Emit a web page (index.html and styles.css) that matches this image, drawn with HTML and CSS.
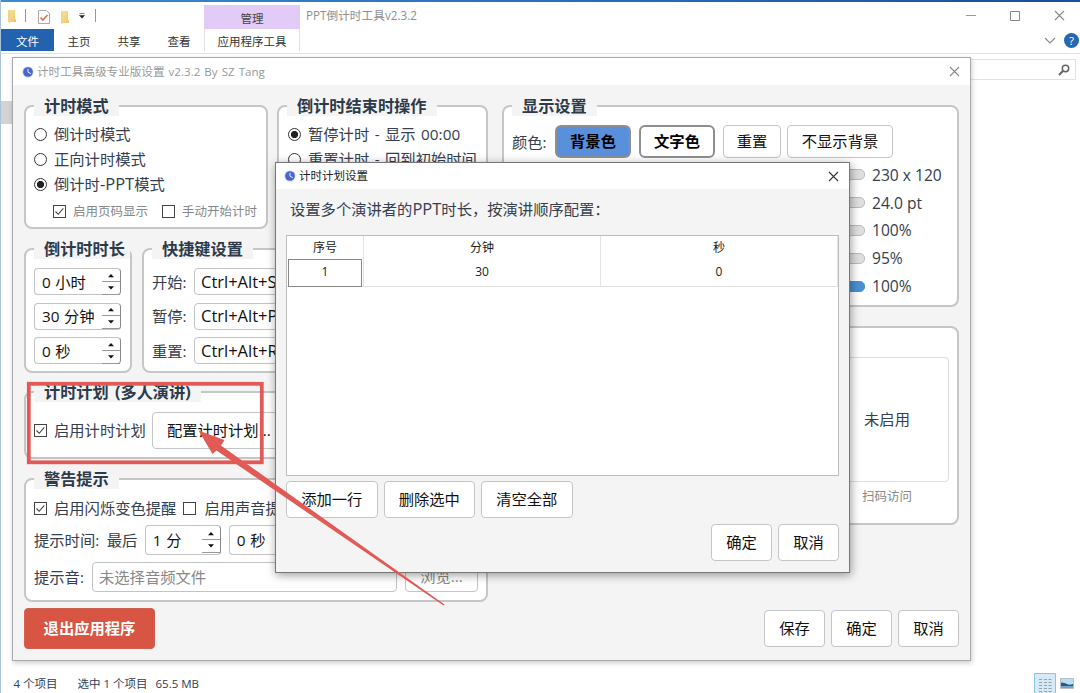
FILE: index.html
```html
<!DOCTYPE html>
<html lang="zh-CN">
<head>
<meta charset="utf-8">
<title>PPT倒计时工具</title>
<link rel="stylesheet" href="styles.css">
</head>
<body>
<svg class="defs" width="0" height="0">
  <defs>
    <linearGradient id="fold" x1="0" y1="0" x2="1" y2="1"><stop offset="0" stop-color="#fbe3a0"/><stop offset="1" stop-color="#f0c766"/></linearGradient>
    <symbol id="folder" viewBox="0 0 12 16"><path d="M2 2h7v9h1v3H2z" fill="url(#fold)"/><path d="M2 2l2 1v12l-2-1z" fill="#f3d588"/></symbol>
    <symbol id="clock" viewBox="0 0 12 12"><circle cx="6" cy="6" r="5.6" fill="#c9cdf0"/><circle cx="6" cy="6" r="4.8" fill="#4a66cc"/><path d="M6 2.8V6.2L8.8 7.6" fill="none" stroke="#e4ebff" stroke-width="1"/></symbol>
    <symbol id="close" viewBox="0 0 11 11"><path d="M1 1l9 9M10 1l-9 9" fill="none" stroke="currentColor" stroke-width="1.1"/></symbol>
    <symbol id="tick" viewBox="0 0 11 11"><path d="M1.500 5.500l2.700 2.800L9.300 2.400" fill="none" stroke="#444" stroke-width="1.1"/></symbol>
    <symbol id="arrows" viewBox="0 0 18 26"><path d="M9 5l3 3.2H6zM9 20.500l3-3.200H6z" fill="#111"/><path d="M0 12.500h18" stroke="#999"/><path d="M0 25.500h18" stroke="#999"/></symbol>
  </defs>
</svg>

<main class="explorer">
  <header class="caption">
    <div class="quick">
      <svg class="q1" width="12" height="16"><use href="#folder"/></svg>
      <i class="bar"></i>
      <svg class="q2" width="12" height="14" viewBox="0 0 12 14"><path d="M.5.5h8l3 3v10H.5z" fill="#fff" stroke="#aaa"/><path d="M2.500 7.500l2.400 2.500 4.600-5" fill="none" stroke="#d9714f" stroke-width="1.6"/></svg>
      <svg class="q3" width="12" height="16"><use href="#folder"/></svg>
      <svg class="q4" width="6" height="6" viewBox="0 0 6 6"><path d="M.5.5h5M.5 2.500h5L3 5.200z" stroke="#333" stroke-width=".6" fill="#222"/></svg>
      <i class="bar"></i>
    </div>
    <div class="context">管理</div>
    <div class="apptitle">PPT倒计时工具v2.3.2</div>
    <div class="controls">
      <svg width="10" height="10" viewBox="0 0 10 10"><path d="M0 4.500h10" stroke="#999"/></svg>
      <svg width="10" height="10" viewBox="0 0 10 10"><path d="M.5.5h9v9h-9z" fill="none" stroke="#888"/></svg>
      <svg width="11" height="11"><use href="#close"/></svg>
    </div>
  </header>
  <nav class="tabs">
    <span class="file">文件</span><span class="tab">主页</span><span class="tab">共享</span><span class="tab">查看</span><span class="tools">应用程序工具</span>
    <svg class="chev" width="12" height="8" viewBox="0 0 12 8"><path d="M1 1l5 5 5-5" fill="none" stroke="#888" stroke-width="1.1"/></svg>
    <span class="help">?</span>
  </nav>
  <div class="address"><div class="search">
    <svg width="12" height="12" viewBox="0 0 12 12"><circle cx="7.500" cy="4.500" r="3.200" fill="none" stroke="#666" stroke-width="1.5"/><path d="M5.200 6.800L1 11" stroke="#666" stroke-width="2"/></svg>
  </div></div>
  <div class="files"><div class="handle"></div></div>
  <footer class="status">
    <span class="count">4 个项目</span><span class="sel">选中 1 个项目</span><span class="size">65.5 MB</span>
    <div class="views">
      <svg class="details" width="22" height="20" viewBox="0 0 22 20"><path d="M.5 20V.5h21V20" fill="#d5eaf6" stroke="#8ec3de"/><path d="M5 6.500h3M5 9.500h3M5 12.500h3M5 15.500h3M5 18.500h3M10 6.500h3M10 9.500h3M10 12.500h3M10 15.500h3M10 18.500h3M14.500 6.500h3M14.500 9.500h3M14.500 12.500h3M14.500 15.500h3M14.500 18.500h3" stroke="#9aa1a8"/></svg>
      <svg width="14" height="11" viewBox="0 0 14 11"><path d="M.5.5h13v10H.5z" fill="#b9dcf7" stroke="#b5bdc6"/><path d="M1 4.500q4 0 6 1.500t6 0v2H1z" fill="#2f5d68"/><path d="M1 8h12v2H1z" fill="#6fa3d8"/></svg>
    </div>
  </footer>
</main>

<section class="window settings">
  <header class="titlebar"><svg width="12" height="12"><use href="#clock"/></svg><span>计时工具高级专业版设置 v2.3.2 By SZ Tang</span><svg class="x" width="11" height="11"><use href="#close"/></svg></header>
  <div class="panes">
    <div class="left">
      <div class="line tall">
        <div class="group mode">
          <h3>计时模式</h3>
          <label class="opt"><i class="radio"></i>倒计时模式</label>
          <label class="opt"><i class="radio"></i>正向计时模式</label>
          <label class="opt"><i class="radio on"></i><span>倒计时<span class="latin">-PPT</span>模式</span></label>
          <div class="sub"><svg class="check" width="13" height="13"><use href="#tick"/></svg><span>启用页码显示</span><svg class="check" width="13" height="13"></svg><span>手动开始计时</span></div>
        </div>
        <div class="group after">
          <h3>倒计时结束时操作</h3>
          <label class="opt"><i class="radio on"></i>暂停计时 - 显示 00:00</label>
          <label class="opt"><i class="radio"></i>重置计时 - 回到初始时间</label>
        </div>
      </div>
      <div class="line mid">
        <div class="group duration">
          <h3>倒计时时长</h3>
          <div class="spin">0 小时<svg width="18" height="26"><use href="#arrows"/></svg></div>
          <div class="spin">30 分钟<svg width="18" height="26"><use href="#arrows"/></svg></div>
          <div class="spin">0 秒<svg width="18" height="26"><use href="#arrows"/></svg></div>
        </div>
        <div class="group keys">
          <h3>快捷键设置</h3>
          <div class="key"><span>开始:</span><div class="field">Ctrl+Alt+S</div></div>
          <div class="key"><span>暂停:</span><div class="field">Ctrl+Alt+P</div></div>
          <div class="key"><span>重置:</span><div class="field">Ctrl+Alt+R</div></div>
        </div>
      </div>
      <div class="group plan">
        <h3>计时计划 (多人演讲)</h3>
        <div class="planrow"><svg class="check" width="13" height="13"><use href="#tick"/></svg><span>启用计时计划</span><button class="btn">配置计时计划...</button></div>
      </div>
      <div class="group warn">
        <h3>警告提示</h3>
        <div class="flags"><svg class="check" width="13" height="13"><use href="#tick"/></svg><span>启用闪烁变色提醒</span><svg class="check" width="13" height="13"></svg><span>启用声音提醒</span></div>
        <div class="when"><span>提示时间:</span><span>最后</span><div class="spin">1 分<svg width="18" height="28" viewBox="0 0 18 26"><use href="#arrows"/></svg></div><div class="spin">0 秒</div></div>
        <div class="sound"><span>提示音:</span><div class="field">未选择音频文件</div><button class="btn browse">浏览...</button></div>
      </div>
    </div>
    <div class="right">
      <div class="group display">
        <h3>显示设置</h3>
        <div class="colors"><span>颜色:</span><button class="btn swatch blue">背景色</button><button class="btn swatch">文字色</button><button class="btn">重置</button><button class="btn">不显示背景</button></div>
        <div class="sliders">
          <div class="slider"><i></i><span>230 x 120</span></div>
          <div class="slider"><i></i><span>24.0 pt</span></div>
          <div class="slider"><i></i><span>100%</span></div>
          <div class="slider"><i class="most"></i><span>95%</span></div>
          <div class="slider"><i class="full"></i><span>100%</span></div>
        </div>
      </div>
      <div class="group remote">
        <div class="qr"><div class="qrbox">未启用</div><small>扫码访问</small></div>
      </div>
    </div>
  </div>
  <footer class="actions"><button class="exit">退出应用程序</button><button class="btn">保存</button><button class="btn">确定</button><button class="btn">取消</button></footer>
</section>

<section class="window modal">
  <header class="titlebar"><svg width="12" height="12"><use href="#clock"/></svg><span>计时计划设置</span><svg class="x" width="11" height="11"><use href="#close"/></svg></header>
  <div class="content">
    <p>设置多个演讲者的<span class="latin">PPT</span>时长，按演讲顺序配置：</p>
    <div class="table">
      <div class="tr head"><span>序号</span><span>分钟</span><span>秒</span></div>
      <div class="tr"><span><b>1</b></span><span>30</span><span>0</span></div>
    </div>
    <div class="edit"><button class="btn">添加一行</button><button class="btn">删除选中</button><button class="btn">清空全部</button></div>
    <div class="confirm"><button class="btn">确定</button><button class="btn">取消</button></div>
  </div>
</section>

<svg class="annotation" width="1080" height="693" viewBox="0 0 1080 693">
  <rect x="28.800" y="383.800" width="233" height="78.500" fill="none" stroke="#e25a56" stroke-width="3.8"/>
  <path d="M198.500 430.500L224.500 440L221 445.500L444.500 604.500L443.500 605.500L216.500 450.500L212.500 454Z" fill="#e25a56"/>
</svg>
</body>
</html>
```
FILE: styles.css
```css
* { box-sizing: border-box; }
body {
  margin: 0; width: 1080px; height: 693px; overflow: hidden; position: relative;
  font: 15.3px/20px "Open Sans", "Noto Sans CJK SC", sans-serif;
  color: #34404f; background: #fff; white-space: nowrap;
}
.defs { position: absolute; }
svg { display: block; flex: none; }
button { font: inherit; color: #111; padding: 0 0 2px; margin: 0; white-space: nowrap; }
.latin { font-size: 16.5px; line-height: 1; }

/* file explorer */
.explorer { height: 693px; display: flex; flex-direction: column; border-left: 1px solid #a9c4da; font-size: 11.5px; }
.caption { height: 29px; border-top: 2px solid #2968b8; border-image: linear-gradient(90deg, #3b8bd2, #2769ba 60%, #1d4ba0) 1; display: flex; }
.quick { display: flex; width: 203px; align-items: center; padding-left: 5px; }
.bar { width: 1px; height: 13px; background: #999; }
.q1 { margin-right: 7px; }
.q2 { margin: 2px 9px 0 12px; }
.q3 { margin-right: 8px; margin-top: 2px; }
.q4 { margin-right: 10px; }
.context { width: 96px; height: 24px; margin-top: 3px; background: #e2ccf7; text-align: center; line-height: 27px; color: #444; }
.apptitle { margin-left: 6px; line-height: 27px; color: #8e8e8e; font-size: 11.700px; }
.controls { margin-left: auto; display: flex; align-items: center; gap: 34px; padding: 0 15px 0 0; color: #888; }
.tabs { height: 25px; display: flex; border-bottom: 1px solid #e2e2e2; line-height: 25px; color: #333; }
.file { width: 53px; height: 22px; background: #2262ae; color: #fff; text-align: center; }
.tab { width: 50px; text-align: center; }
.tools { width: 96px; height: 22px; text-align: center; border: solid #e4e0e8; border-width: 0 1px; }
.chev { margin: 8px 8px 0 auto; }
.help { width: 15px; height: 15px; line-height: 15px; margin: 4px 1px 0 0; border-radius: 50%; background: #2667b2; color: #fff; text-align: center; }
.address { height: 26px; display: flex; justify-content: flex-end; padding: 5px 4px 0 0; }
.search { width: 180px; height: 21px; border: 1px solid #e2e2e2; display: flex; justify-content: flex-end; align-items: center; padding-right: 5px; }
.files { flex: 1; padding-top: 21px; }
.handle { width: 12px; height: 23px; background: #d3d3d3; }
.status { height: 20px; display: flex; align-items: center; padding-left: 12.500px; line-height: 22px; color: #2f4058; }
.status > span { height: 20px; }
.count { width: 64px; }
.sel { width: 78px; }
.views { margin-left: auto; display: flex; align-items: center; gap: 4px; padding-right: 6px; }

/* windows on the desktop */
.window { position: absolute; border: 1px solid #a9a9a9; background: #f4f4f5; box-shadow: 1px 2px 5px rgba(0,0,0,.2); }
.settings { left: 12px; top: 57px; width: 959px; height: 604px; }
.modal { left: 275px; top: 162px; width: 575px; height: 411px; border-color: #777; box-shadow: 1px 2px 9px rgba(0,0,0,.4); }
.titlebar { height: 27px; display: flex; align-items: center; gap: 3px; padding: 0 10px 0 9px; background: #fff; font-size: 11.600px; word-spacing: 1px; color: #999; }
.titlebar .x { margin-left: auto; color: #888; }
.modal .titlebar { color: #222; font-size: 11.5px; padding: 0 10px 0 8px; gap: 3px; height: 26px; }
.modal .titlebar .x { color: #333; }

/* settings layout */
.panes { display: flex; gap: 14px; padding: 20px 11px 0; }
.left { width: 464px; display: flex; flex-direction: column; }
.right { width: 457px; display: flex; flex-direction: column; gap: 19px; }
.line { display: flex; gap: 9px; }
.group { border: 2px solid #c4c6c7; border-radius: 8px; background: #fff; padding: 0 8px; }
h3 { margin: -11px 0 6px; width: max-content; height: 20px; padding: 0 10px; line-height: 21px; font-size: 16.2px; font-weight: 700; background: #f4f4f5; color: #2c3a4a; }
.tall { height: 124px; margin-bottom: 19px; }
.mid { height: 125px; margin-bottom: 18px; gap: 10px; }
.mode { width: 244px; }
.after { width: 211px; padding-left: 9px; }
.after h3 { margin-left: -1px; }
.opt { height: 25px; display: flex; align-items: center; gap: 7px; word-spacing: 1.500px; line-height: 18px; padding-bottom: 1px; }
.radio { width: 13px; height: 13px; border: 1px solid #333; border-radius: 50%; }
.radio.on { background: radial-gradient(circle, #222 3.2px, #fff 4px); }
.check { border: 1px solid #444; }
.sub { height: 28px; display: flex; align-items: center; padding-left: 19px; font-size: 12.5px; color: #85898c; }
.sub span { margin: 1px 14px 0 7px; }
.sub span:last-child { margin-right: 0; }
.duration { width: 108px; }
.duration h3 { width: 96px; padding-right: 0; }
.duration h3, .keys h3 { margin-bottom: 9px; }
.keys { width: 346px; }
.spin, .field { border: 1px solid #c3c3c3; border-radius: 4px; background: #fff; color: #111; display: flex; align-items: center; padding-left: 7px; }
.spin { justify-content: space-between; border-right-color: #888; word-spacing: .6px; }
.duration .spin { width: 87px; height: 27px; margin-bottom: 7.500px; line-height: 26px; }
.key { display: flex; align-items: center; height: 27px; margin-bottom: 7.500px; }
.key span { width: 42px; }
.key .field { width: 130px; height: 27px; padding-left: 6px; font-size: 16.500px; }
.btn { height: 37px; border: 1px solid #c3c5c6; border-radius: 4px; background: #fff; }
.plan { height: 68px; margin-bottom: 19px; }
.plan h3 { margin-bottom: 10px; word-spacing: 2px; }
.planrow { display: flex; align-items: center; }
.planrow span { margin: 0 6px 1px 7px; }
.planrow .btn { width: 134px; }
.warn { height: 124px; }
.warn h3 { margin-bottom: 7px; }
.flags { display: flex; align-items: center; height: 24px; }
.flags span { margin: 0 7px 1px; }
.flags span:last-child { margin-left: 8px; }
.when { display: flex; align-items: center; height: 30px; margin: 5px 0 7px; }
.when span { margin-right: 7.500px; }
.when .spin { width: 76px; height: 30px; margin-right: 8px; }
.sound { display: flex; align-items: center; }
.sound span { width: 58px; }
.sound .field { width: 305px; height: 30px; padding-left: 6px; color: #888; }
.browse { width: 73px; height: 30px; margin-left: 8px; color: #888; }
.display { height: 202px; }
.colors { display: flex; align-items: center; margin-top: 9px; }
.colors > span { width: 43px; }
.colors .btn { width: 58px; height: 33px; margin-right: 6px; }
.colors .swatch { width: 76px; border: 2px solid #8d8f91; border-radius: 6px; font-weight: 700; margin-right: 8px; color: #000; }
.colors .blue { background: #5a8fdc; }
.colors .btn:last-child { width: 106px; margin: 0; }
.sliders { padding: 3px 0 0 58px; font-size: 15.600px; }
.slider { height: 27.800px; display: flex; align-items: center; }
.slider i { width: 295px; height: 11px; border: 1px solid #bbb; border-radius: 5px; background: #dfdfdf; margin-right: 7px; }
.slider .most { background: linear-gradient(90deg, #4a90d2 95%, #dfdfdf 95%); }
.slider .full { background: #4a90d2; border-color: #4a90d2; }
.remote { height: 199px; display: flex; justify-content: flex-end; padding: 29px 8px 0; }
.qr { width: 124px; text-align: center; }
.qrbox { height: 125px; border: 1px solid #dcdedf; border-radius: 4px; line-height: 122px; }
small { display: block; font-size: 12.5px; color: #888; margin-top: 5px; }
.actions { display: flex; align-items: center; gap: 6px; padding: 6px 11px 0; }
.actions .btn { width: 61px; }
.exit { width: 131px; height: 41px; margin-right: auto; border: 1px solid #d0604f; border-radius: 4px; background: #d85543; color: #fff; font-weight: 700; }

/* plan dialog */
.content { padding: 10px 10px 0; display: flex; flex-direction: column; }
.modal p { margin: 0 0 16px 4px; height: 20px; line-height: 20px; }
.table { height: 241px; border: 1px solid #bdbdbd; background: #fff; font-size: 12px; color: #222; }
.tr { display: grid; grid-template-columns: 77px 237px 1fr; height: 28px; text-align: center; line-height: 25px; border-bottom: 1px solid #dedede; }
.tr span { border-right: 1px solid #e4e4e4; }
.tr span:first-child { padding: 0 1px; }
.tr.head { height: 23px; border: 0; line-height: 24px; }
.tr b { display: block; width: 74px; height: 28px; border: 1px solid #888; font-weight: 400; line-height: 24px; }
.edit { display: flex; gap: 6px; margin-top: 5px; }
.edit .btn { width: 91.500px; }
.confirm { display: flex; gap: 6px; justify-content: flex-end; margin-top: 6px; }
.confirm .btn { width: 61px; }

.annotation { position: absolute; left: 0; top: 0; pointer-events: none; }
```
